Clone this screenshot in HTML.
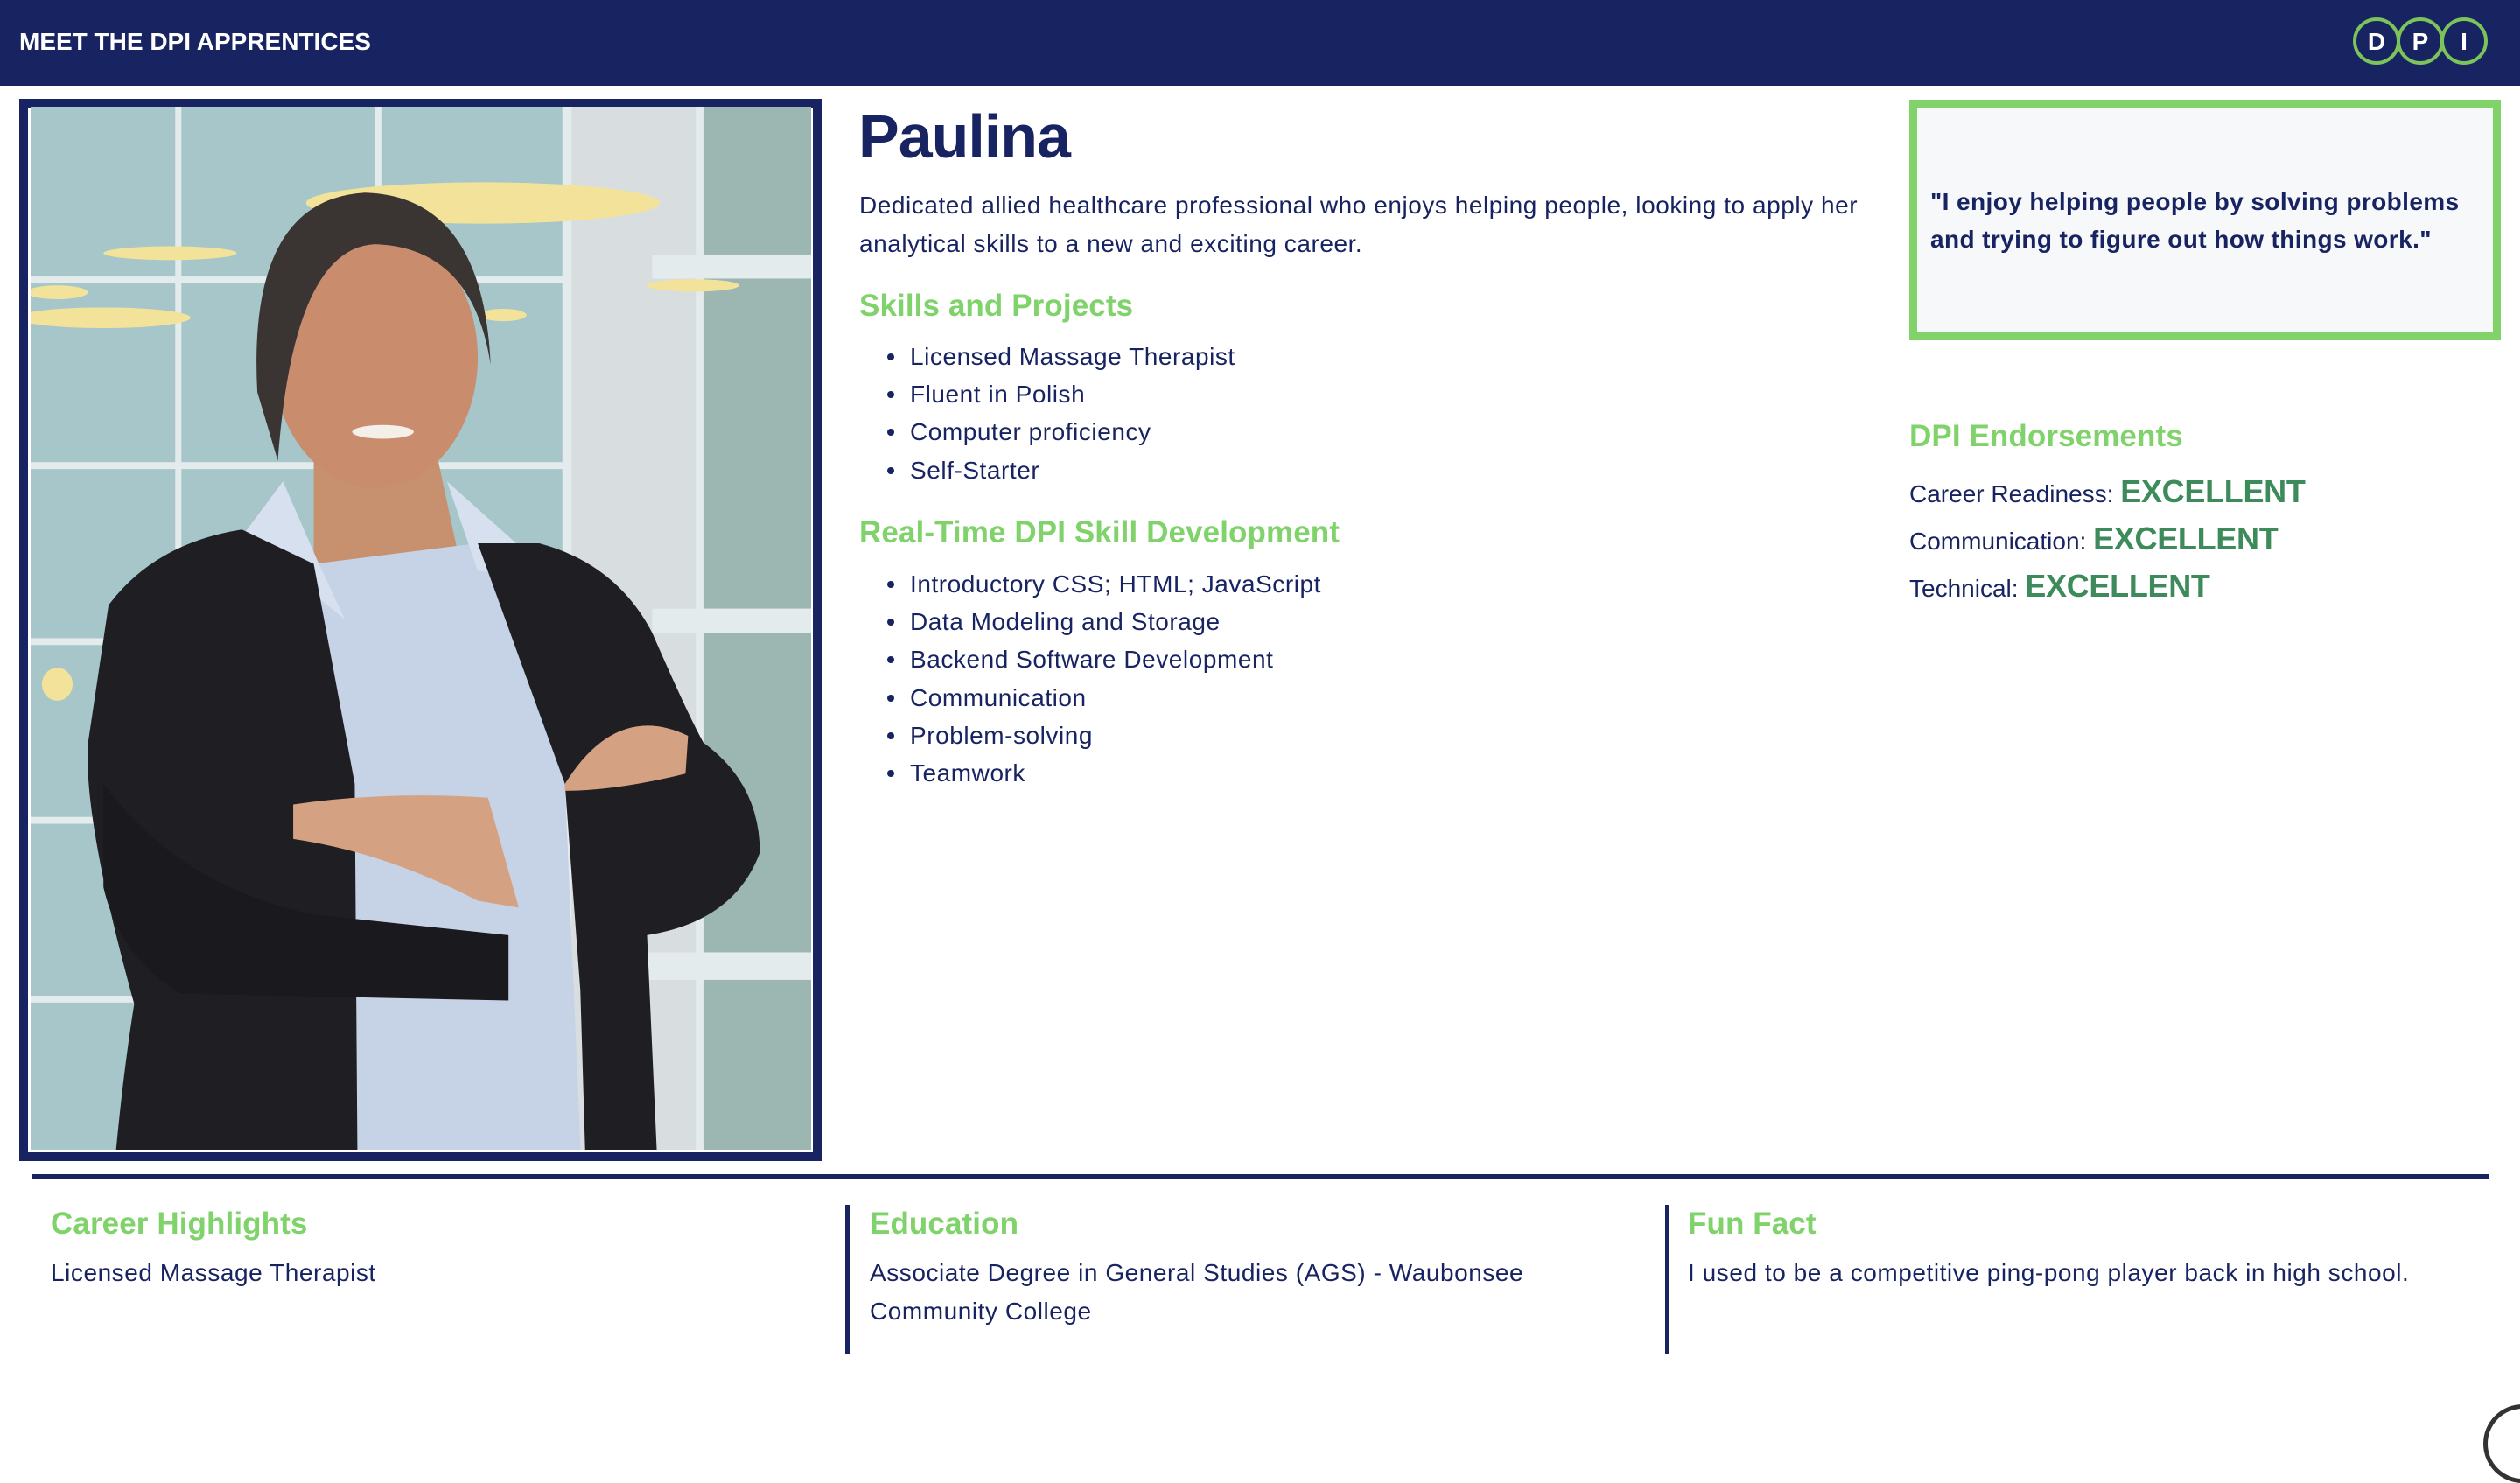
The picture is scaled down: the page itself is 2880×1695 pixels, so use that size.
<!DOCTYPE html>
<html><head><meta charset="utf-8">
<style>
*{margin:0;padding:0;box-sizing:border-box}
body{width:2880px;height:1648px;position:relative;background:#fff;font-family:"Liberation Sans",sans-serif;color:#182462;overflow:hidden}
.a{position:absolute;white-space:nowrap}
.hdr{left:0;top:0;width:2880px;height:98px;background:#182462}
.g{color:#80d26a;font-weight:bold;font-size:35px;letter-spacing:0.1px}
.t{font-size:28px;line-height:44px;letter-spacing:0.55px}
ul{list-style:none}
li{position:relative;padding-left:58px;font-size:28px;height:43.2px;line-height:43px;letter-spacing:0.55px}
li:before{content:"";position:absolute;left:32px;top:18px;width:8px;height:8px;border-radius:50%;background:#182462}
.ex{color:#3d8a5a;font-weight:bold;font-size:36px;letter-spacing:-0.3px}
</style></head><body>
<div class="a hdr"></div>
<div class="a" style="left:22px;top:30px;color:#fff;font-weight:bold;font-size:28px;line-height:36px">MEET THE DPI APPRENTICES</div>
<svg class="a" style="left:2680px;top:14px" width="180" height="70" viewBox="0 0 180 70">
<g fill="none" stroke="#7cc35a" stroke-width="4">
<circle cx="36" cy="33" r="25"/><circle cx="86" cy="33" r="25"/><circle cx="136" cy="33" r="25"/>
</g>
<g fill="#fff" font-family="Liberation Sans" font-weight="bold" font-size="28" text-anchor="middle">
<text x="36" y="43">D</text><text x="86" y="43">P</text><text x="136" y="43">I</text></g>
</svg>

<div class="a" style="left:22px;top:113px;width:917px;height:1214px;background:#182462"></div>
<div class="a" style="left:32px;top:123px;width:897px;height:1194px;background:#fff"></div>
<svg class="a" style="left:35px;top:122px" width="892" height="1192" viewBox="8 15 1522 1517" preserveAspectRatio="none">
<rect x="0" y="0" width="1548" height="2070" fill="#a6c6c9"/>
<rect x="1060" y="0" width="250" height="2070" fill="#d8dde0"/>
<rect x="1310" y="0" width="240" height="2070" fill="#9cb6b2"/>
<g fill="#e4ebec">
<rect x="290" y="0" width="12" height="2070"/><rect x="680" y="0" width="12" height="2070"/><rect x="1045" y="0" width="18" height="2070"/><rect x="1305" y="0" width="15" height="2070"/>
<rect x="0" y="262" width="1060" height="10"/><rect x="0" y="532" width="1060" height="10"/><rect x="0" y="788" width="1060" height="10"/><rect x="0" y="1048" width="1060" height="10"/><rect x="0" y="1308" width="1060" height="10"/>
<rect x="1220" y="230" width="320" height="35"/><rect x="1220" y="745" width="320" height="35"/><rect x="1210" y="1245" width="330" height="40"/>
</g>
<g fill="#f3e39a">
<ellipse cx="890" cy="155" rx="345" ry="30"/><ellipse cx="280" cy="228" rx="130" ry="10"/><ellipse cx="1300" cy="275" rx="90" ry="9"/><ellipse cx="150" cy="322" rx="170" ry="15"/><ellipse cx="930" cy="318" rx="45" ry="9"/><ellipse cx="60" cy="285" rx="60" ry="10"/><ellipse cx="60" cy="855" rx="30" ry="24"/>
</g>
<path d="M560 520 L800 520 L840 660 L700 800 L560 680 Z" fill="#c7916f"/>
<ellipse cx="680" cy="380" rx="200" ry="190" fill="#c98d6e"/>
<path d="M450 430 Q430 150 660 140 Q890 145 905 390 Q870 220 680 215 Q520 220 490 530 Z" fill="#3a3432"/>
<ellipse cx="695" cy="488" rx="60" ry="10" fill="#f4efe8"/>
<path d="M560 680 L880 650 L1050 1000 L1110 2045 L650 2045 L640 1000 Z" fill="#c6d3e6"/>
<path d="M420 640 L500 560 L570 680 L620 760 Z M820 560 L1030 700 L880 690 Z" fill="#d7e0ef"/>
<path d="M160 740 Q250 650 420 630 L560 680 L640 1000 L650 2045 L140 2045 Q150 1600 210 1320 Q110 1050 120 940 Z" fill="#1f1e22"/>
<path d="M880 650 L1000 650 Q1150 680 1220 780 Q1290 900 1320 940 Q1430 1000 1430 1100 Q1380 1200 1210 1220 L1260 2045 L1110 2045 L1080 1300 L1050 1000 Z" fill="#1f1e22"/>
<path d="M520 1030 Q700 1010 900 1020 L960 1180 L880 1170 Q700 1100 520 1080 Z" fill="#d4a283"/>
<path d="M1050 1000 Q1150 880 1290 930 L1285 985 Q1150 1010 1050 1010 Z" fill="#d4a283"/>
<path d="M150 1000 Q300 1150 560 1190 L940 1220 L940 1315 L300 1305 Q180 1250 150 1150 Z" fill="#1a191d"/>
</svg>

<div class="a" style="left:981px;top:116px;font-size:70px;font-weight:bold;line-height:80px;letter-spacing:-1px">Paulina</div>
<div class="a t" style="left:982px;top:213px">Dedicated allied healthcare professional who enjoys helping people, looking to apply her</div>
<div class="a t" style="left:982px;top:257px">analytical skills to a new and exciting career.</div>
<div class="a g" style="left:982px;top:330px">Skills and Projects</div>
<ul class="a" style="left:982px;top:386px">
<li>Licensed Massage Therapist</li><li>Fluent in Polish</li><li>Computer proficiency</li><li>Self-Starter</li></ul>
<div class="a g" style="left:982px;top:589px">Real-Time DPI Skill Development</div>
<ul class="a" style="left:982px;top:646px">
<li>Introductory CSS; HTML; JavaScript</li><li>Data Modeling and Storage</li><li>Backend Software Development</li><li>Communication</li><li>Problem-solving</li><li>Teamwork</li></ul>

<div class="a" style="left:2182px;top:114px;width:676px;height:275px;border:9px solid #82d26a;background:#f7f8fa"></div>
<div class="a" style="left:2206px;top:209px;font-size:28px;font-weight:bold;line-height:43px;letter-spacing:0.4px">"I enjoy helping people by solving problems<br>and trying to figure out how things work."</div>
<div class="a g" style="left:2182px;top:479px">DPI Endorsements</div>
<div class="a" style="left:2182px;top:540px;font-size:28px;line-height:44px">Career Readiness: <span class="ex">EXCELLENT</span></div>
<div class="a" style="left:2182px;top:594px;font-size:28px;line-height:44px">Communication: <span class="ex">EXCELLENT</span></div>
<div class="a" style="left:2182px;top:648px;font-size:28px;line-height:44px">Technical: <span class="ex">EXCELLENT</span></div>

<div class="a" style="left:36px;top:1342px;width:2808px;height:6px;background:#182462"></div>
<div class="a" style="left:966px;top:1377px;width:5px;height:171px;background:#182462"></div>
<div class="a" style="left:1903px;top:1377px;width:5px;height:171px;background:#182462"></div>
<div class="a g" style="left:58px;top:1379px">Career Highlights</div>
<div class="a t" style="left:58px;top:1433px">Licensed Massage Therapist</div>
<div class="a g" style="left:994px;top:1379px">Education</div>
<div class="a t" style="left:994px;top:1433px">Associate Degree in General Studies (AGS) - Waubonsee<br>Community College</div>
<div class="a g" style="left:1929px;top:1379px">Fun Fact</div>
<div class="a t" style="left:1929px;top:1433px">I used to be a competitive ping-pong player back in high school.</div>
<div class="a" style="left:2838px;top:1605px;width:90px;height:90px;border:5px solid #333;border-radius:50%"></div>
</body></html>
